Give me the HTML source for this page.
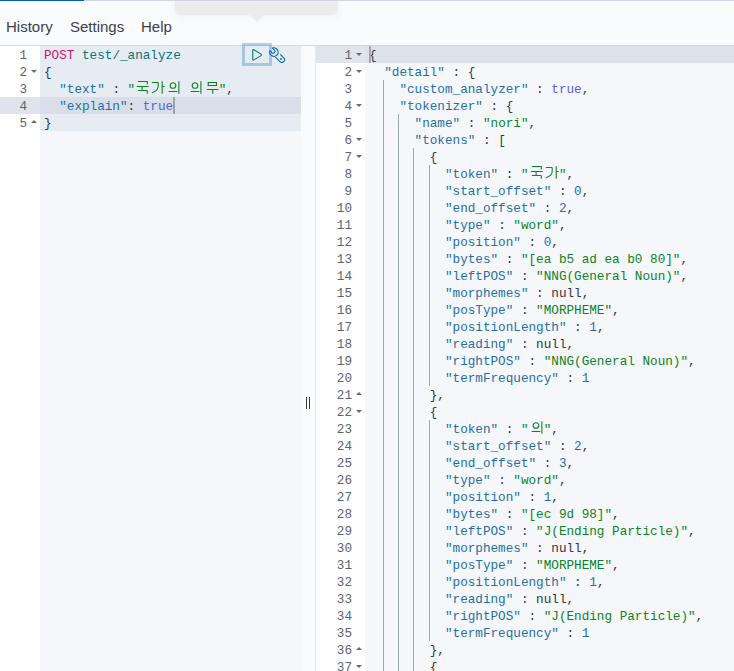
<!DOCTYPE html>
<html><head><meta charset="utf-8"><style>
*{margin:0;padding:0;box-sizing:border-box}
html,body{width:734px;height:671px;overflow:hidden;background:#fafbfd}
body{position:relative;font-family:"Liberation Sans",sans-serif}
b,i{font-weight:normal;font-style:normal}
.topbar{position:absolute;left:0;top:0;width:734px;height:1px;background:#d0d5df}
.topbar .blue{position:absolute;left:0;top:0;width:84px;height:1px;background:#005db0}
.hdr{position:absolute;left:0;top:1px;width:734px;height:45px;background:#fafbfd;border-bottom:1px solid #d3dae6}
.menu{position:absolute;top:17px;font-size:15px;color:#3d404a;line-height:18px}
.tip{position:absolute;left:175px;top:0;width:163px;height:15px;background:#ececee;border-radius:0 0 5px 5px;box-shadow:0 2px 8px rgba(40,50,70,.05)}
.tiparrow{position:absolute;left:250px;top:14px;width:0;height:0;border-left:7px solid transparent;border-right:7px solid transparent;border-top:7px solid #ececee}
.ed{position:absolute;top:46px;height:625px;overflow:hidden}
.mono{font-family:"Liberation Mono",monospace;font-size:12.66px;line-height:17px;white-space:pre}
.gut{position:absolute;top:0;height:625px;background:#fff}
.gc{position:absolute;left:0;width:100%;height:17px;padding-right:13px;padding-top:1px;text-align:right;color:#5e636d;font-family:"Liberation Mono",monospace;font-size:12.66px;line-height:17px}
.fd,.fu{position:absolute;right:3px;top:7px;width:0;height:0;border-left:3px solid transparent;border-right:3px solid transparent}
.fd{border-top:3.5px solid #6a6a6a}
.fu{border-bottom:3.5px solid #6a6a6a;top:6px}
.content{position:absolute;top:0;height:625px;background:#f5f7fa}
.ln{position:absolute;left:0;height:17px}
.ig{position:absolute;width:1px;height:17px;background:#9ea7b7}
.m{color:#d4146e}.u{color:#08747c}.k{color:#1f6fa4}.s{color:#0b8226}.c{color:#5b5cf0}.n{color:#1f6cb4}.p{color:#343741}.nl{color:#343741}
.w{display:inline-block;width:15.20px;height:17px;position:relative;top:-1px;vertical-align:top}.w svg{display:block}
</style></head><body>
<div class="hdr">
  <div class="menu" style="left:6px">History</div>
  <div class="menu" style="left:70px">Settings</div>
  <div class="menu" style="left:141px">Help</div>
</div>
<div class="tip"></div><svg style="position:absolute;left:0;top:0" width="300" height="30"><path d="M249.5 14.5 L264.5 14.5 L257 22.2 Z" fill="#ececee"/></svg>
<div class="topbar"><div class="blue"></div></div>

<div class="ed" style="left:0;width:301px">
  <div class="gut" style="left:0;width:40px;background:#fff"></div>
  <div class="content" style="left:40px;width:261px"></div>
  <div style="position:absolute;left:40px;top:0;width:261px;height:85px;background:#e7ebf2"></div>
  <div style="position:absolute;left:0;top:51px;width:40px;height:17px;background:#dfe3eb"></div><div style="position:absolute;left:40px;top:51px;width:261px;height:17px;background:#d9dfe8"></div>
  <div class="gut" style="left:0;width:40px;background:transparent"><div class="gc" style="top:0px">1</div><div class="gc" style="top:17px">2<span class="fd"></span></div><div class="gc" style="top:34px">3</div><div class="gc" style="top:51px">4</div><div class="gc" style="top:68px">5<span class="fu"></span></div></div>
  <div class="mono" style="position:absolute;left:44px;top:1px"><div class="ln" style="top:0px"><b class="m">POST</b> <b class="u">test/_analyze</b></div><div class="ln" style="top:17px"><b class="p">{</b></div><div class="ln" style="top:34px">  <b class="k">"text"</b><b class="p"> : </b><b class="s">"<i class="w"><svg width="15.2" height="17" viewBox="0 0 15.2 17"><path d="M2.9 1.5H12.3V4.5M1.9 6.5H13.6M7.1 6.5V10M2.9 10.5H11.9Q12.3 10.5 12.3 11V13.8" fill="none" stroke="currentColor" stroke-width="1.1"/></svg></i><i class="w"><svg width="15.2" height="17" viewBox="0 0 15.2 17"><path d="M1.9 2.5H7.6Q8.2 2.5 8.2 3.2V6.2Q8.2 10.6 1.9 12.8M12.2 1.2V13.8M12.2 6.5H14.6" fill="none" stroke="currentColor" stroke-width="1.1"/></svg></i><i class="w"><svg width="15.2" height="17" viewBox="0 0 15.2 17"><path d="M2.7 11.5H11.3M12.9 1.2V13.8M7 2.7A2.8 2.8 0 1 0 7 8.3A2.8 2.8 0 1 0 7 2.7Z" fill="none" stroke="currentColor" stroke-width="1.1"/></svg></i> <i class="w"><svg width="15.2" height="17" viewBox="0 0 15.2 17"><path d="M2.7 11.5H11.3M12.9 1.2V13.8M7 2.7A2.8 2.8 0 1 0 7 8.3A2.8 2.8 0 1 0 7 2.7Z" fill="none" stroke="currentColor" stroke-width="1.1"/></svg></i><i class="w"><svg width="15.2" height="17" viewBox="0 0 15.2 17"><path d="M4.2 2.5H12.5V5.5H4.2ZM2.7 9.5H14.4M8.7 9.5V13.8" fill="none" stroke="currentColor" stroke-width="1.1"/></svg></i>"</b><b class="p">,</b></div><div class="ln" style="top:51px">  <b class="k">"explain"</b><b class="p">: </b><b class="c">true</b></div><div class="ln" style="top:68px"><b class="p">}</b></div></div>
  <div style="position:absolute;left:173.2px;top:51px;width:2px;height:17px;background:#9ea2aa"></div>
</div>

<div style="position:absolute;left:301px;top:46px;width:14px;height:625px;background:#fafbfd"></div>
<div style="position:absolute;left:242px;top:43px;width:30px;height:23px;border:3px solid rgba(0,107,180,.28)"></div>
<svg style="position:absolute;left:246px;top:44px" width="22" height="22" viewBox="0 0 22 22"><path d="M6.7 6.5 Q6.7 5.1 7.9 5.8 L15.0 10.1 Q15.9 10.9 15.0 11.6 L7.9 15.9 Q6.7 16.6 6.7 15.2 Z" fill="none" stroke="#017d73" stroke-width="1.1" stroke-linejoin="round"/></svg>
<svg style="position:absolute;left:266px;top:44px" width="22" height="22" viewBox="0 0 22 22"><path d="M6.4 4.1 L8.6 6.3 A1.77 1.77 0 0 1 6.1 8.8 L3.9 6.6 A4.3 4.3 0 1 0 6.4 4.1 Z M8.65 12.25 L13.95 17.55 A2.67 2.67 0 0 0 18.05 14.15 L14.2 10.3" fill="none" stroke="#006bb4" stroke-width="1.05" stroke-linejoin="round"/><circle cx="15" cy="15" r="0.9" fill="#006bb4"/></svg>

<div style="position:absolute;left:306px;top:397px;width:1.3px;height:12px;background:#343741"></div>
<div style="position:absolute;left:309px;top:397px;width:1.3px;height:12px;background:#343741"></div>

<div class="ed" style="left:315px;width:419px;border-left:1px solid #e4e8ef">
  <div class="gut" style="left:0;width:49px;background:#fff"></div>
  <div class="content" style="left:49px;width:370px"></div>
  <div style="position:absolute;left:0;top:0;width:49px;height:17px;background:#e0e4eb"></div><div style="position:absolute;left:49px;top:0;width:370px;height:17px;background:#dce2ea"></div>
  <div class="gut" style="left:0;width:49px;background:transparent"><div class="gc" style="top:0px">1<span class="fd"></span></div><div class="gc" style="top:17px">2<span class="fd"></span></div><div class="gc" style="top:34px">3</div><div class="gc" style="top:51px">4<span class="fd"></span></div><div class="gc" style="top:68px">5</div><div class="gc" style="top:85px">6<span class="fd"></span></div><div class="gc" style="top:102px">7<span class="fd"></span></div><div class="gc" style="top:119px">8</div><div class="gc" style="top:136px">9</div><div class="gc" style="top:153px">10</div><div class="gc" style="top:170px">11</div><div class="gc" style="top:187px">12</div><div class="gc" style="top:204px">13</div><div class="gc" style="top:221px">14</div><div class="gc" style="top:238px">15</div><div class="gc" style="top:255px">16</div><div class="gc" style="top:272px">17</div><div class="gc" style="top:289px">18</div><div class="gc" style="top:306px">19</div><div class="gc" style="top:323px">20</div><div class="gc" style="top:340px">21<span class="fu"></span></div><div class="gc" style="top:357px">22<span class="fd"></span></div><div class="gc" style="top:374px">23</div><div class="gc" style="top:391px">24</div><div class="gc" style="top:408px">25</div><div class="gc" style="top:425px">26</div><div class="gc" style="top:442px">27</div><div class="gc" style="top:459px">28</div><div class="gc" style="top:476px">29</div><div class="gc" style="top:493px">30</div><div class="gc" style="top:510px">31</div><div class="gc" style="top:527px">32</div><div class="gc" style="top:544px">33</div><div class="gc" style="top:561px">34</div><div class="gc" style="top:578px">35</div><div class="gc" style="top:595px">36<span class="fu"></span></div><div class="gc" style="top:612px">37<span class="fd"></span></div></div>
  <div style="position:absolute;left:53px;top:0"><div class="ig" style="top:34px;left:14px"></div><div class="ig" style="top:51px;left:14px"></div><div class="ig" style="top:68px;left:14px"></div><div class="ig" style="top:68px;left:29px"></div><div class="ig" style="top:85px;left:14px"></div><div class="ig" style="top:85px;left:29px"></div><div class="ig" style="top:102px;left:14px"></div><div class="ig" style="top:102px;left:29px"></div><div class="ig" style="top:102px;left:44px"></div><div class="ig" style="top:119px;left:14px"></div><div class="ig" style="top:119px;left:29px"></div><div class="ig" style="top:119px;left:44px"></div><div class="ig" style="top:119px;left:60px"></div><div class="ig" style="top:136px;left:14px"></div><div class="ig" style="top:136px;left:29px"></div><div class="ig" style="top:136px;left:44px"></div><div class="ig" style="top:136px;left:60px"></div><div class="ig" style="top:153px;left:14px"></div><div class="ig" style="top:153px;left:29px"></div><div class="ig" style="top:153px;left:44px"></div><div class="ig" style="top:153px;left:60px"></div><div class="ig" style="top:170px;left:14px"></div><div class="ig" style="top:170px;left:29px"></div><div class="ig" style="top:170px;left:44px"></div><div class="ig" style="top:170px;left:60px"></div><div class="ig" style="top:187px;left:14px"></div><div class="ig" style="top:187px;left:29px"></div><div class="ig" style="top:187px;left:44px"></div><div class="ig" style="top:187px;left:60px"></div><div class="ig" style="top:204px;left:14px"></div><div class="ig" style="top:204px;left:29px"></div><div class="ig" style="top:204px;left:44px"></div><div class="ig" style="top:204px;left:60px"></div><div class="ig" style="top:221px;left:14px"></div><div class="ig" style="top:221px;left:29px"></div><div class="ig" style="top:221px;left:44px"></div><div class="ig" style="top:221px;left:60px"></div><div class="ig" style="top:238px;left:14px"></div><div class="ig" style="top:238px;left:29px"></div><div class="ig" style="top:238px;left:44px"></div><div class="ig" style="top:238px;left:60px"></div><div class="ig" style="top:255px;left:14px"></div><div class="ig" style="top:255px;left:29px"></div><div class="ig" style="top:255px;left:44px"></div><div class="ig" style="top:255px;left:60px"></div><div class="ig" style="top:272px;left:14px"></div><div class="ig" style="top:272px;left:29px"></div><div class="ig" style="top:272px;left:44px"></div><div class="ig" style="top:272px;left:60px"></div><div class="ig" style="top:289px;left:14px"></div><div class="ig" style="top:289px;left:29px"></div><div class="ig" style="top:289px;left:44px"></div><div class="ig" style="top:289px;left:60px"></div><div class="ig" style="top:306px;left:14px"></div><div class="ig" style="top:306px;left:29px"></div><div class="ig" style="top:306px;left:44px"></div><div class="ig" style="top:306px;left:60px"></div><div class="ig" style="top:323px;left:14px"></div><div class="ig" style="top:323px;left:29px"></div><div class="ig" style="top:323px;left:44px"></div><div class="ig" style="top:323px;left:60px"></div><div class="ig" style="top:340px;left:14px"></div><div class="ig" style="top:340px;left:29px"></div><div class="ig" style="top:340px;left:44px"></div><div class="ig" style="top:357px;left:14px"></div><div class="ig" style="top:357px;left:29px"></div><div class="ig" style="top:357px;left:44px"></div><div class="ig" style="top:374px;left:14px"></div><div class="ig" style="top:374px;left:29px"></div><div class="ig" style="top:374px;left:44px"></div><div class="ig" style="top:374px;left:60px"></div><div class="ig" style="top:391px;left:14px"></div><div class="ig" style="top:391px;left:29px"></div><div class="ig" style="top:391px;left:44px"></div><div class="ig" style="top:391px;left:60px"></div><div class="ig" style="top:408px;left:14px"></div><div class="ig" style="top:408px;left:29px"></div><div class="ig" style="top:408px;left:44px"></div><div class="ig" style="top:408px;left:60px"></div><div class="ig" style="top:425px;left:14px"></div><div class="ig" style="top:425px;left:29px"></div><div class="ig" style="top:425px;left:44px"></div><div class="ig" style="top:425px;left:60px"></div><div class="ig" style="top:442px;left:14px"></div><div class="ig" style="top:442px;left:29px"></div><div class="ig" style="top:442px;left:44px"></div><div class="ig" style="top:442px;left:60px"></div><div class="ig" style="top:459px;left:14px"></div><div class="ig" style="top:459px;left:29px"></div><div class="ig" style="top:459px;left:44px"></div><div class="ig" style="top:459px;left:60px"></div><div class="ig" style="top:476px;left:14px"></div><div class="ig" style="top:476px;left:29px"></div><div class="ig" style="top:476px;left:44px"></div><div class="ig" style="top:476px;left:60px"></div><div class="ig" style="top:493px;left:14px"></div><div class="ig" style="top:493px;left:29px"></div><div class="ig" style="top:493px;left:44px"></div><div class="ig" style="top:493px;left:60px"></div><div class="ig" style="top:510px;left:14px"></div><div class="ig" style="top:510px;left:29px"></div><div class="ig" style="top:510px;left:44px"></div><div class="ig" style="top:510px;left:60px"></div><div class="ig" style="top:527px;left:14px"></div><div class="ig" style="top:527px;left:29px"></div><div class="ig" style="top:527px;left:44px"></div><div class="ig" style="top:527px;left:60px"></div><div class="ig" style="top:544px;left:14px"></div><div class="ig" style="top:544px;left:29px"></div><div class="ig" style="top:544px;left:44px"></div><div class="ig" style="top:544px;left:60px"></div><div class="ig" style="top:561px;left:14px"></div><div class="ig" style="top:561px;left:29px"></div><div class="ig" style="top:561px;left:44px"></div><div class="ig" style="top:561px;left:60px"></div><div class="ig" style="top:578px;left:14px"></div><div class="ig" style="top:578px;left:29px"></div><div class="ig" style="top:578px;left:44px"></div><div class="ig" style="top:578px;left:60px"></div><div class="ig" style="top:595px;left:14px"></div><div class="ig" style="top:595px;left:29px"></div><div class="ig" style="top:595px;left:44px"></div><div class="ig" style="top:612px;left:14px"></div><div class="ig" style="top:612px;left:29px"></div><div class="ig" style="top:612px;left:44px"></div></div>
  <div class="mono" style="position:absolute;left:53px;top:1px"><div class="ln" style="top:0px"><b class="p">{</b></div><div class="ln" style="top:17px">  <b class="k">"detail"</b><b class="p"> : {</b></div><div class="ln" style="top:34px">    <b class="k">"custom_analyzer"</b><b class="p"> : </b><b class="c">true</b><b class="p">,</b></div><div class="ln" style="top:51px">    <b class="k">"tokenizer"</b><b class="p"> : {</b></div><div class="ln" style="top:68px">      <b class="k">"name"</b><b class="p"> : </b><b class="s">"nori"</b><b class="p">,</b></div><div class="ln" style="top:85px">      <b class="k">"tokens"</b><b class="p"> : [</b></div><div class="ln" style="top:102px">        <b class="p">{</b></div><div class="ln" style="top:119px">          <b class="k">"token"</b><b class="p"> : </b><b class="s">"<i class="w"><svg width="15.2" height="17" viewBox="0 0 15.2 17"><path d="M2.9 1.5H12.3V4.5M1.9 6.5H13.6M7.1 6.5V10M2.9 10.5H11.9Q12.3 10.5 12.3 11V13.8" fill="none" stroke="currentColor" stroke-width="1.1"/></svg></i><i class="w"><svg width="15.2" height="17" viewBox="0 0 15.2 17"><path d="M1.9 2.5H7.6Q8.2 2.5 8.2 3.2V6.2Q8.2 10.6 1.9 12.8M12.2 1.2V13.8M12.2 6.5H14.6" fill="none" stroke="currentColor" stroke-width="1.1"/></svg></i>"</b><b class="p">,</b></div><div class="ln" style="top:136px">          <b class="k">"start_offset"</b><b class="p"> : </b><b class="n">0</b><b class="p">,</b></div><div class="ln" style="top:153px">          <b class="k">"end_offset"</b><b class="p"> : </b><b class="n">2</b><b class="p">,</b></div><div class="ln" style="top:170px">          <b class="k">"type"</b><b class="p"> : </b><b class="s">"word"</b><b class="p">,</b></div><div class="ln" style="top:187px">          <b class="k">"position"</b><b class="p"> : </b><b class="n">0</b><b class="p">,</b></div><div class="ln" style="top:204px">          <b class="k">"bytes"</b><b class="p"> : </b><b class="s">"[ea b5 ad ea b0 80]"</b><b class="p">,</b></div><div class="ln" style="top:221px">          <b class="k">"leftPOS"</b><b class="p"> : </b><b class="s">"NNG(General Noun)"</b><b class="p">,</b></div><div class="ln" style="top:238px">          <b class="k">"morphemes"</b><b class="p"> : </b><b class="nl">null</b><b class="p">,</b></div><div class="ln" style="top:255px">          <b class="k">"posType"</b><b class="p"> : </b><b class="s">"MORPHEME"</b><b class="p">,</b></div><div class="ln" style="top:272px">          <b class="k">"positionLength"</b><b class="p"> : </b><b class="n">1</b><b class="p">,</b></div><div class="ln" style="top:289px">          <b class="k">"reading"</b><b class="p"> : </b><b class="nl">null</b><b class="p">,</b></div><div class="ln" style="top:306px">          <b class="k">"rightPOS"</b><b class="p"> : </b><b class="s">"NNG(General Noun)"</b><b class="p">,</b></div><div class="ln" style="top:323px">          <b class="k">"termFrequency"</b><b class="p"> : </b><b class="n">1</b></div><div class="ln" style="top:340px">        <b class="p">},</b></div><div class="ln" style="top:357px">        <b class="p">{</b></div><div class="ln" style="top:374px">          <b class="k">"token"</b><b class="p"> : </b><b class="s">"<i class="w"><svg width="15.2" height="17" viewBox="0 0 15.2 17"><path d="M2.7 11.5H11.3M12.9 1.2V13.8M7 2.7A2.8 2.8 0 1 0 7 8.3A2.8 2.8 0 1 0 7 2.7Z" fill="none" stroke="currentColor" stroke-width="1.1"/></svg></i>"</b><b class="p">,</b></div><div class="ln" style="top:391px">          <b class="k">"start_offset"</b><b class="p"> : </b><b class="n">2</b><b class="p">,</b></div><div class="ln" style="top:408px">          <b class="k">"end_offset"</b><b class="p"> : </b><b class="n">3</b><b class="p">,</b></div><div class="ln" style="top:425px">          <b class="k">"type"</b><b class="p"> : </b><b class="s">"word"</b><b class="p">,</b></div><div class="ln" style="top:442px">          <b class="k">"position"</b><b class="p"> : </b><b class="n">1</b><b class="p">,</b></div><div class="ln" style="top:459px">          <b class="k">"bytes"</b><b class="p"> : </b><b class="s">"[ec 9d 98]"</b><b class="p">,</b></div><div class="ln" style="top:476px">          <b class="k">"leftPOS"</b><b class="p"> : </b><b class="s">"J(Ending Particle)"</b><b class="p">,</b></div><div class="ln" style="top:493px">          <b class="k">"morphemes"</b><b class="p"> : </b><b class="nl">null</b><b class="p">,</b></div><div class="ln" style="top:510px">          <b class="k">"posType"</b><b class="p"> : </b><b class="s">"MORPHEME"</b><b class="p">,</b></div><div class="ln" style="top:527px">          <b class="k">"positionLength"</b><b class="p"> : </b><b class="n">1</b><b class="p">,</b></div><div class="ln" style="top:544px">          <b class="k">"reading"</b><b class="p"> : </b><b class="nl">null</b><b class="p">,</b></div><div class="ln" style="top:561px">          <b class="k">"rightPOS"</b><b class="p"> : </b><b class="s">"J(Ending Particle)"</b><b class="p">,</b></div><div class="ln" style="top:578px">          <b class="k">"termFrequency"</b><b class="p"> : </b><b class="n">1</b></div><div class="ln" style="top:595px">        <b class="p">},</b></div><div class="ln" style="top:612px">        <b class="p">{</b></div></div>
  <div style="position:absolute;left:53px;top:0;width:2px;height:17px;background:#a3a8b0"></div>
</div>

</body></html>
